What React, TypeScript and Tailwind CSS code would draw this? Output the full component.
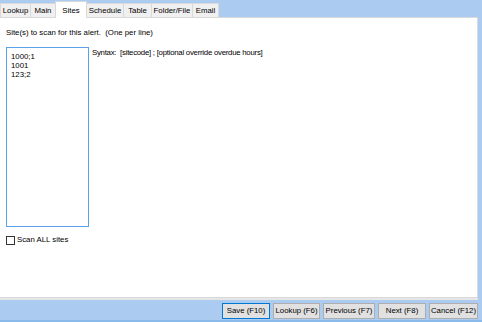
import { useState } from "react"

const tabs = [
  { label: "Lookup", w: "w-[31px]" },
  { label: "Main", w: "w-[26px]" },
  { label: "Sites", w: "w-[32px]" },
  { label: "Schedule", w: "w-[38px]" },
  { label: "Table", w: "w-[29px]" },
  { label: "Folder/File", w: "w-[42px]" },
  { label: "Email", w: "w-[27px]" },
]

const buttons = [
  { label: "Save (F10)", w: "w-[48px]" },
  { label: "Lookup (F6)", w: "w-[47px]" },
  { label: "Previous (F7)", w: "w-[52px]" },
  { label: "Next (F8)", w: "w-[48px]" },
  { label: "Cancel (F12)", w: "w-[49px]" },
]

export default function App() {
  const [sites, setSites] = useState("1000;1\n1001\n123;2")
  const [all, setAll] = useState(false)

  return (
    <div
      className="w-[482px] h-[322px] bg-[#abcbf0] flex flex-col text-[7.8px] text-black overflow-hidden whitespace-nowrap"
      style={{ fontFamily: '"Liberation Sans", Arial, sans-serif' }}
    >
      <div className="flex items-end h-[17px]">
        {tabs.map((t) =>
          t.label === "Sites" ? (
            <div
              key={t.label}
              className={`${t.w} h-[17px] -mb-px -ml-px bg-white border border-b-0 border-[#d9d9d9] flex justify-center pt-[3px] relative z-10`}
            >
              {t.label}
            </div>
          ) : (
            <div
              key={t.label}
              className={`${t.w} h-[14px] bg-[#f0f0f0] border border-b-0 border-[#d9d9d9] flex items-center justify-center -ml-px first:ml-0 leading-none`}
            >
              {t.label}
            </div>
          )
        )}
      </div>
      <div className="h-[281px] bg-white border border-[#d9d9d9] border-l-0 w-[478px] flex flex-col px-[6px]">
        <div className="mt-[10px] leading-[10px]">Site(s) to scan for this alert.&nbsp; (One per line)</div>
        <div className="flex mt-[9px] gap-[3px]">
          <textarea
            value={sites}
            onChange={(e) => setSites(e.target.value)}
            className="w-[83px] h-[180px] border border-[#5ea0e6] resize-none outline-none px-[4px] pt-[4px] leading-[9px]"
            style={{ fontFamily: "inherit", fontSize: "7.8px" }}
          />
          <div className="mt-[1px] leading-[10px] tracking-[-0.25px]">
            Syntax:&nbsp; [sitecode] ; [optional override overdue hours]
          </div>
        </div>
        <label className="flex items-center gap-[2px] mt-[8px] leading-[10px]">
          <span
            onClick={() => setAll(!all)}
            className="w-[9px] h-[9px] border border-[#333] bg-white inline-block"
          />
          <span>Scan ALL sites</span>
        </label>
      </div>
      <div className="h-[2px] bg-[#e6e6e6] w-[478px]" />
      <div className="flex justify-end gap-[3px] pr-[4px] pt-[3px] h-[22px] border-b-2 border-[#8ab9ec]">
        {buttons.map((b, i) => (
          <button
            key={b.label}
            className={`${b.w} h-[16px] bg-[#e1e1e1] border leading-none whitespace-nowrap ${
              i === 0 ? "border-[#0078d7]" : "border-[#adadad]"
            }`}
            style={{ fontFamily: "inherit", fontSize: "7.8px" }}
          >
            {b.label}
          </button>
        ))}
      </div>
    </div>
  )
}
